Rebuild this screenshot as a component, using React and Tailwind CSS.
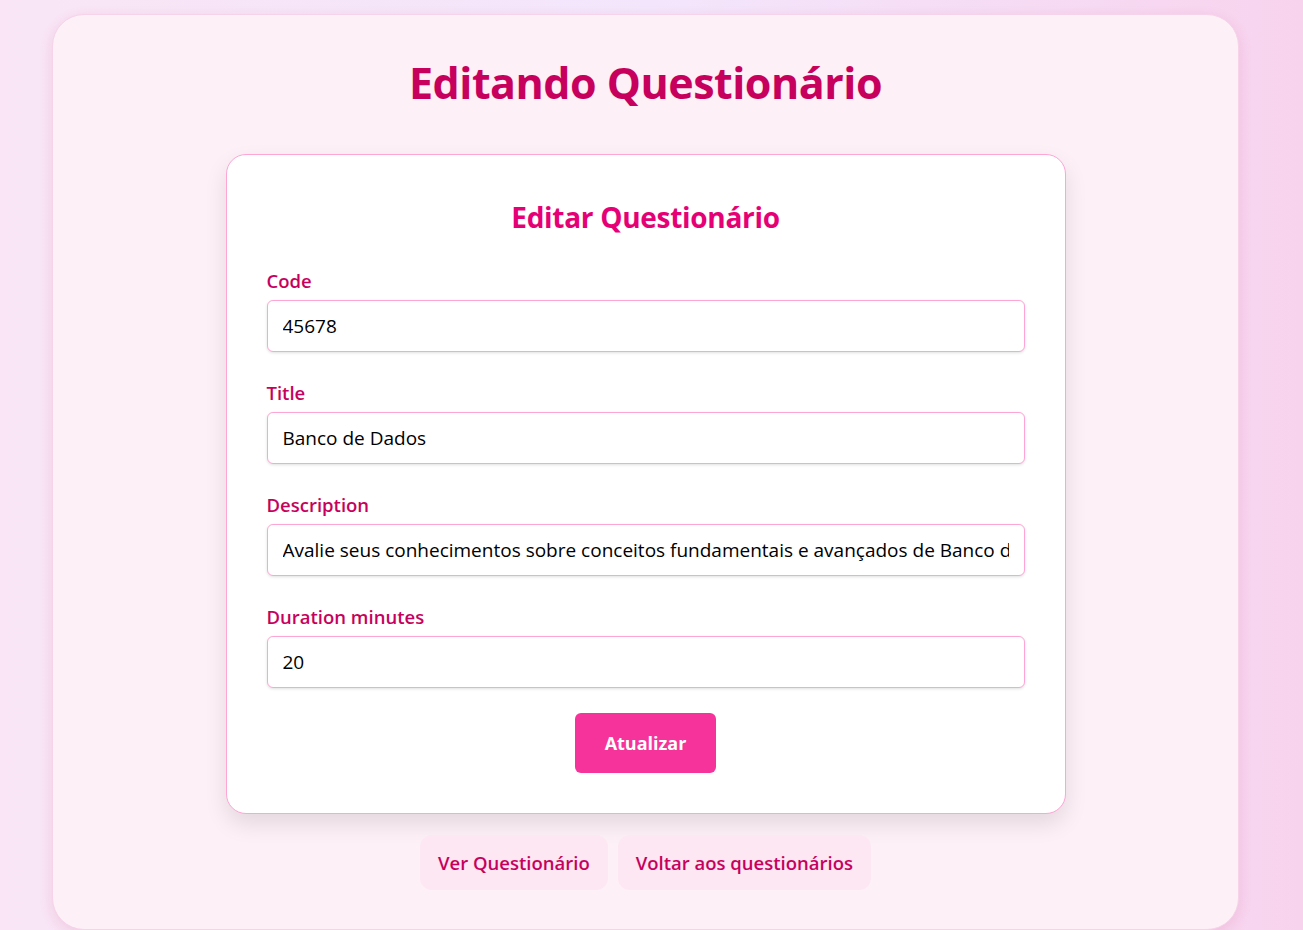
import React, { useState } from 'react';

const fields = [
  { name: 'code', label: 'Code', value: '45678' },
  { name: 'title', label: 'Title', value: 'Banco de Dados' },
  {
    name: 'description',
    label: 'Description',
    value: 'Avalie seus conhecimentos sobre conceitos fundamentais e avançados de Banco de Dados relacionais e não relacionais.',
  },
  { name: 'duration_minutes', label: 'Duration minutes', value: '20' },
];

const App = () => {
  const [form, setForm] = useState(
    Object.fromEntries(fields.map(f => [f.name, f.value]))
  );

  const handleChange = (e) => setForm({ ...form, [e.target.name]: e.target.value });

  return (
    <div
      className="min-h-screen bg-linear-to-r from-[#f9e5f5] via-[#f3e6fc] to-[#f8d3ee] pt-[14px] pl-[52px] pb-10"
      style={{ fontFamily: '"Open Sans", "Noto Sans", sans-serif' }}
    >
      <div className="w-[1187px] rounded-[32px] bg-[#fdf0f7] border border-[#f6d3e9] shadow-[0_4px_14px_rgba(190,24,93,0.12)] pt-[38px] pb-[39px] flex flex-col items-center">
        {/* Page title */}
        <h1 className="text-[43px] leading-[60px] font-bold text-pink-700 tracking-[-0.5px]">
          Editando Questionário
        </h1>

        {/* Form card */}
        <div className="mt-[41px] w-[840px] rounded-[20px] border border-pink-300 bg-white p-10 shadow-[0_10px_22px_rgba(0,0,0,0.10)]">
          <h2 className="text-center text-[28px] leading-[44px] font-bold text-pink-600 tracking-[-0.3px]">
            Editar Questionário
          </h2>

          <form className="mt-[30px] flex flex-col" onSubmit={e => e.preventDefault()}>
            {fields.map((f, i) => (
              <div key={f.name} className={i === fields.length - 1 ? 'mb-[25px]' : 'mb-[29px]'}>
                <label className="block text-[18.5px] leading-[24px] font-semibold text-pink-700 mb-[7px]">
                  {f.label}
                </label>
                <input
                  name={f.name}
                  value={form[f.name]}
                  onChange={handleChange}
                  className="w-full h-[52px] rounded-md border border-pink-300 bg-white px-[15px] text-[19px] text-black shadow-[0_1px_3px_rgba(0,0,0,0.12)] outline-none"
                />
              </div>
            ))}
            <div className="flex justify-center">
              <button
                type="submit"
                className="h-[60px] w-[141px] rounded-md bg-pink-500 text-[18px] font-bold text-white"
              >
                Atualizar
              </button>
            </div>
          </form>
        </div>

        {/* Links */}
        <div className="mt-[21px] flex gap-[10px]">
          <a href="#" className="h-[55px] flex items-center px-[18px] rounded-xl bg-pink-100 text-[18.5px] font-semibold text-pink-700">
            Ver Questionário
          </a>
          <a href="#" className="h-[55px] flex items-center px-[18px] rounded-xl bg-pink-100 text-[18.5px] font-semibold text-pink-700">
            Voltar aos questionários
          </a>
        </div>
      </div>
    </div>
  );
};

export default App;
